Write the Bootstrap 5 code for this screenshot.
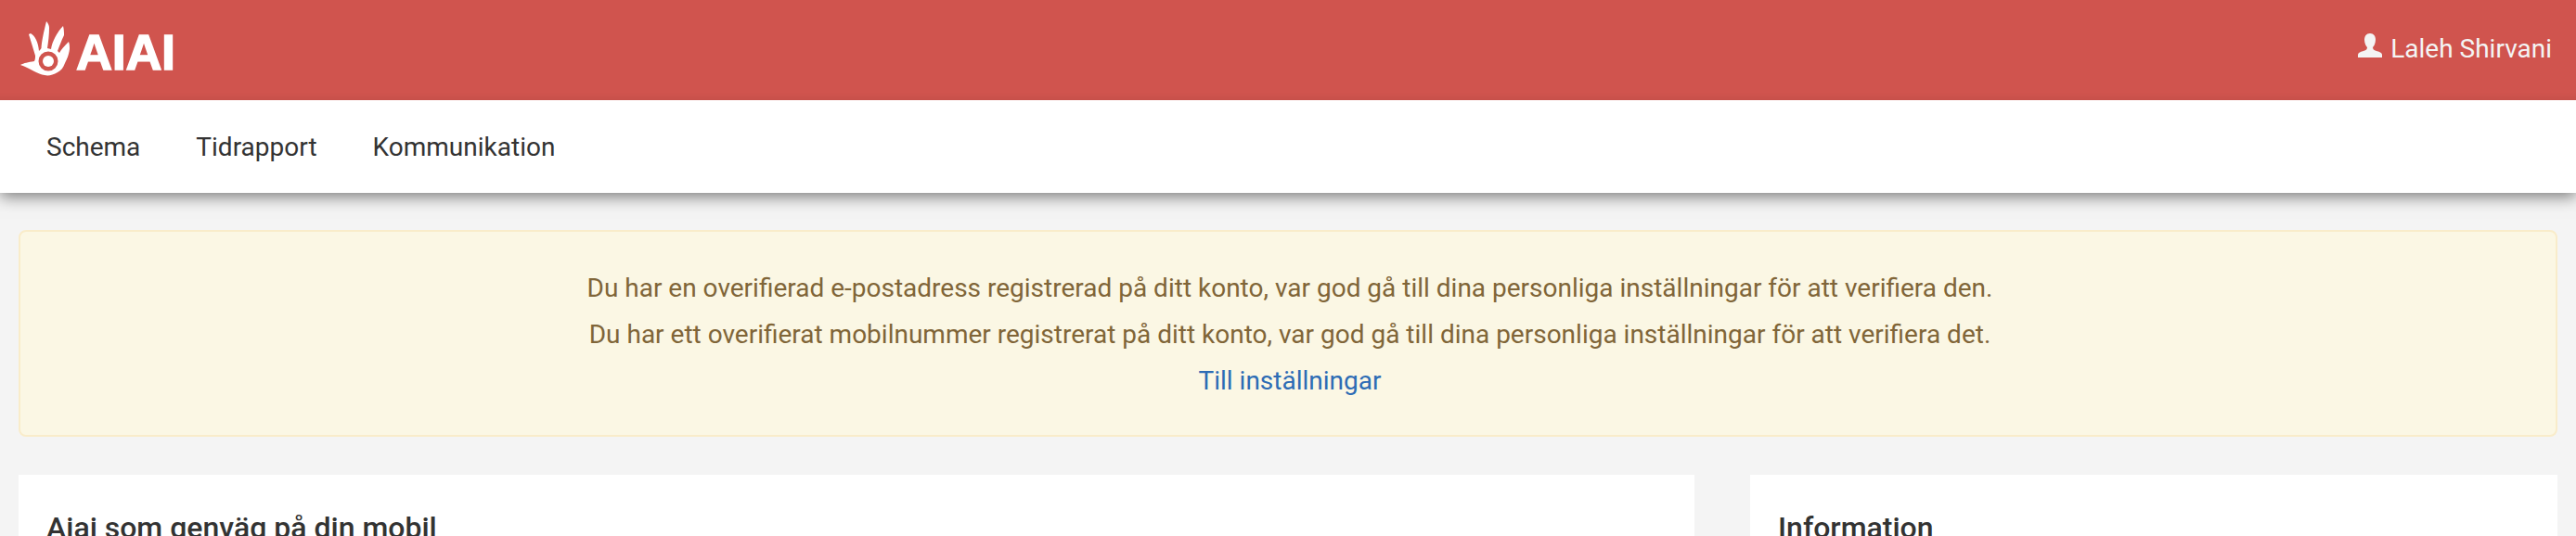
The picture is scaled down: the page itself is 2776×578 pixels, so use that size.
<!DOCTYPE html>
<html lang="sv">
<head>
<meta charset="utf-8">
<title>Aiai</title>
<link href="https://cdn.jsdelivr.net/npm/bootstrap@5.3.0/dist/css/bootstrap.min.css" rel="stylesheet">
<style>
html, body { height: 100%; overflow: hidden; }
body { background: #f4f4f4; color: #333; font-family: Roboto, "Liberation Sans", sans-serif; font-size: 28px; line-height: 1.43; }
.top-bar { height: 108px; background: #d0544e; color: #f4f4f4; box-shadow: inset 0 -10px 10px -10px rgba(0,0,0,.1); position: relative; z-index: 2; }
.brand-link { color: #fff; text-decoration: none; }
.brand-mark { width: 62px; height: 62px; margin-left: 15px; margin-top: 15px; overflow: visible; }
.brand-word { font-family: "Liberation Sans", sans-serif; font-weight: 700; font-size: 54px; line-height: 1; color: #fff; margin-top: 29px; margin-left: 5px; letter-spacing: -.3px; -webkit-text-stroke: 1.5px #fff; }
.user-line { margin: 35px 26px 0 0; line-height: 34px; }
.user-icon { width: 28px; height: 28px; margin-right: 8px; vertical-align: -1px; fill: #f4f4f4; }
.sub-nav { height: 100px; background: #fff; box-shadow: 0 4px 16px rgba(0,0,0,.5); position: relative; padding-left: 20px; }
.sub-nav .nav-link { color: #333; padding: 0 30px; line-height: 102px; }
.notice { margin: 40px 20px 0; height: 223px; padding: 36px 26px 28px 30px; background: #fbf7e4; border: 2px solid #f9ecca; border-radius: 8px; color: #806538; text-align: center; line-height: 50px; }
.notice a { color: #2d6cb5; text-decoration: none; }
.notice p { margin: 0; }
.panel-row { margin: 41px 20px 0; gap: 60px; }
.panel-box { background: #fff; padding: 30px; height: 200px; }
.panel-main { flex: 0 0 1806px; }
.panel-side { flex: 1 1 auto; }
.panel-box h2 { font-size: 32px; font-weight: 500; color: #333; margin: 10px 0 0; line-height: 1.1; }
</style>
</head>
<body>
<header class="top-bar d-flex justify-content-between align-items-start">
  <a class="brand-link d-flex" href="#">
    <svg class="brand-mark" viewBox="15 15 62 62" aria-hidden="true"><path fill="#fff" fill-rule="evenodd" d="M22 70 C26 68 30 67 37 66 C38 64 38 62 38 60 L35 50 L31 37 L33 36 C38 39 41 45 42 55 C43 54 44 53 44.5 52 C45 44 47 35 50 23 C52 25 53 28 53 30 C53 38 52 45 51 52 L55 53 C56 45 62 34 68 28 C69 32 69 35 69 38 C66 44 64 50 62 55 L64 57 C66 53 69 50 74 45 C75 48 75 50 75 53 C74 60 72 64 70 68 C68 73 66 76 62 78 C57 81 52 82 48 81 C41 80 33 74 22 70 Z M52 55.5 A10.5 10.5 0 1 0 52.01 76.5 A10.5 10.5 0 1 0 52 55.5 Z"/><circle cx="52" cy="66" r="6" fill="#fff"/></svg>
    <span class="brand-word">AIAI</span>
  </a>
  <div class="user-line">
    <svg class="user-icon" viewBox="0 0 28 28" aria-hidden="true"><path d="M14 1 C18 1 20 4 20 8 C20 12 18 15 17 16 C17 18 18 19 21 20 C25 21 27 22 27 24 L27 27 L1 27 L1 24 C1 22 3 21 7 20 C10 19 11 18 11 16 C10 15 8 12 8 8 C8 4 10 1 14 1 Z"/></svg>Laleh Shirvani
  </div>
</header>
<nav class="sub-nav">
  <ul class="nav">
    <li class="nav-item"><a class="nav-link" href="#">Schema</a></li>
    <li class="nav-item"><a class="nav-link" href="#">Tidrapport</a></li>
    <li class="nav-item"><a class="nav-link" href="#">Kommunikation</a></li>
  </ul>
</nav>
<div class="notice">
  <p>Du har en overifierad e-postadress registrerad på ditt konto, var god gå till dina personliga inställningar för att verifiera den.</p>
  <p>Du har ett overifierat mobilnummer registrerat på ditt konto, var god gå till dina personliga inställningar för att verifiera det.</p>
  <p><a href="#">Till inställningar</a></p>
</div>
<div class="panel-row d-flex">
  <section class="panel-box panel-main"><h2>Aiai som genväg på din mobil</h2></section>
  <section class="panel-box panel-side"><h2>Information</h2></section>
</div>
</body>
</html>
